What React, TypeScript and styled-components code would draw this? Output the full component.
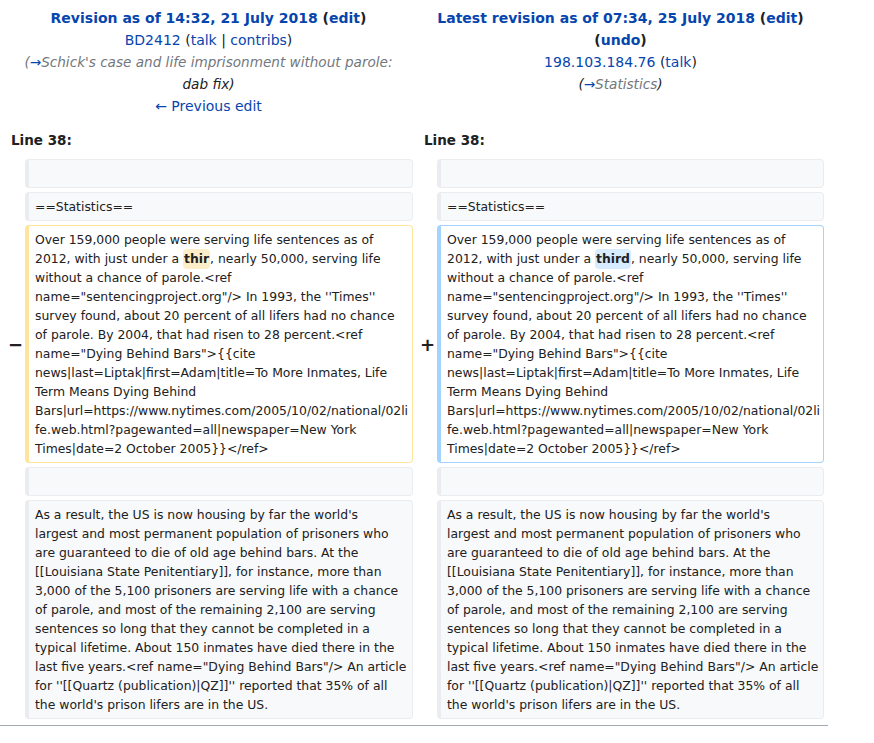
import React from "react";
import styled, { createGlobalStyle } from "styled-components";

const GlobalStyle = createGlobalStyle`
  html, body { margin: 0; padding: 0; background: #ffffff; }
  body { font-family: "DejaVu Sans", Verdana, sans-serif; color: #202122; }
`;

const DiffTable = styled.div`
  width: 828px;
  box-sizing: border-box;
  display: grid;
  grid-template-columns: 17px 388px 16px 387px;
  column-gap: 4px;
  row-gap: 4px;
  padding: 4px 4px 6px 4px;
  border-bottom: 1px solid #a2a9b1;
`;

const Header = styled.div`
  grid-column: span 2;
  text-align: center;
  font-size: 14px;
  line-height: 22px;
  padding-top: 3px;
`;

const HeaderLine = styled.div<{ $bold?: boolean }>`
  font-weight: ${(p) => (p.$bold ? "bold" : "normal")};
`;

const Link = styled.a`
  color: #0645ad;
  text-decoration: none;
`;

const Comment = styled.span`
  font-style: italic;
  font-size: 13.6px;
`;

const AutoComment = styled.span`
  color: #72777d;
`;

const LineNo = styled.div`
  grid-column: span 2;
  font-weight: bold;
  font-size: 13.5px;
  line-height: 22px;
  padding: 8px 0 4px 7px;
`;

const Marker = styled.div`
  display: flex;
  align-items: center;
  justify-content: flex-end;
  margin-right: -2px;
  font-weight: bold;
  font-size: 18px;
  color: #202122;
`;

type Kind = "context" | "deleted" | "added";

const Cell = styled.div<{ $kind: Kind }>`
  box-sizing: border-box;
  min-height: 29px;
  font-size: 12.4px;
  line-height: 19px;
  padding: 4px 6px 4px 6px;
  border: 1px solid
    ${(p) => (p.$kind === "deleted" ? "#ffe49c" : p.$kind === "added" ? "#a3d3ff" : "#eaecf0")};
  border-left-width: 4px;
  border-radius: 4px;
  background: ${(p) => (p.$kind === "context" ? "#f8f9fa" : "#ffffff")};
`;

const TextLine = styled.div`
  white-space: pre;
`;

const Change = styled.span<{ $kind: "del" | "ins" }>`
  font-weight: bold;
  background: ${(p) => (p.$kind === "del" ? "#feeec8" : "#d8ecff")};
  border-radius: 4px;
  padding: 2px 1px 3px;
`;

const para1Head = [
  "Over 159,000 people were serving life sentences as of",
];
const para1Line2Before = "2012, with just under a ";
const para1Line2After = ", nearly 50,000, serving life";
const para1Tail = [
  "without a chance of parole.<ref",
  'name="sentencingproject.org"/> In 1993, the \'\'Times\'\'',
  "survey found, about 20 percent of all lifers had no chance",
  "of parole. By 2004, that had risen to 28 percent.<ref",
  'name="Dying Behind Bars">{{cite',
  "news|last=Liptak|first=Adam|title=To More Inmates, Life",
  "Term Means Dying Behind",
  "Bars|url=https://www.nytimes.com/2005/10/02/national/02li",
  "fe.web.html?pagewanted=all|newspaper=New York",
  "Times|date=2 October 2005}}</ref>",
];

const para2 = [
  "As a result, the US is now housing by far the world's",
  "largest and most permanent population of prisoners who",
  "are guaranteed to die of old age behind bars. At the",
  "[[Louisiana State Penitentiary]], for instance, more than",
  "3,000 of the 5,100 prisoners are serving life with a chance",
  "of parole, and most of the remaining 2,100 are serving",
  "sentences so long that they cannot be completed in a",
  "typical lifetime. About 150 inmates have died there in the",
  'last five years.<ref name="Dying Behind Bars"/> An article',
  "for ''[[Quartz (publication)|QZ]]'' reported that 35% of all",
  "the world's prison lifers are in the US.",
];

function Lines({ lines }: { lines: string[] }) {
  return (
    <>
      {lines.map((l, i) => (
        <TextLine key={i}>{l}</TextLine>
      ))}
    </>
  );
}

function ChangedPara({ kind, word }: { kind: "del" | "ins"; word: string }) {
  return (
    <>
      <Lines lines={para1Head} />
      <TextLine>
        {para1Line2Before}
        <Change $kind={kind}>{word}</Change>
        {para1Line2After}
      </TextLine>
      <Lines lines={para1Tail} />
    </>
  );
}

export default function App() {
  return (
    <>
      <GlobalStyle />
      <DiffTable>
        <Header>
          <HeaderLine $bold>
            <Link href="#">Revision as of 14:32, 21 July 2018</Link> (<Link href="#">edit</Link>)
          </HeaderLine>
          <HeaderLine>
            <Link href="#">BD2412</Link> (<Link href="#">talk</Link> | <Link href="#">contribs</Link>)
          </HeaderLine>
          <HeaderLine>
            <Comment>
              <AutoComment>
                (<Link href="#">→</Link>Schick's case and life imprisonment without parole:
              </AutoComment>
              <br />
              dab fix)
            </Comment>
          </HeaderLine>
          <HeaderLine>
            <Link href="#">← Previous edit</Link>
          </HeaderLine>
        </Header>
        <Header>
          <HeaderLine $bold>
            <Link href="#">Latest revision as of 07:34, 25 July 2018</Link> (<Link href="#">edit</Link>)
          </HeaderLine>
          <HeaderLine $bold>
            (<Link href="#">undo</Link>)
          </HeaderLine>
          <HeaderLine>
            <Link href="#">198.103.184.76</Link> (<Link href="#">talk</Link>)
          </HeaderLine>
          <HeaderLine>
            <Comment>
              (<Link href="#">→</Link>
              <AutoComment>Statistics</AutoComment>)
            </Comment>
          </HeaderLine>
        </Header>

        <LineNo>Line 38:</LineNo>
        <LineNo>Line 38:</LineNo>

        <Marker />
        <Cell $kind="context"></Cell>
        <Marker />
        <Cell $kind="context"></Cell>

        <Marker />
        <Cell $kind="context">==Statistics==</Cell>
        <Marker />
        <Cell $kind="context">==Statistics==</Cell>

        <Marker>−</Marker>
        <Cell $kind="deleted">
          <ChangedPara kind="del" word="thir" />
        </Cell>
        <Marker>+</Marker>
        <Cell $kind="added">
          <ChangedPara kind="ins" word="third" />
        </Cell>

        <Marker />
        <Cell $kind="context"></Cell>
        <Marker />
        <Cell $kind="context"></Cell>

        <Marker />
        <Cell $kind="context">
          <Lines lines={para2} />
        </Cell>
        <Marker />
        <Cell $kind="context">
          <Lines lines={para2} />
        </Cell>
      </DiffTable>
    </>
  );
}
